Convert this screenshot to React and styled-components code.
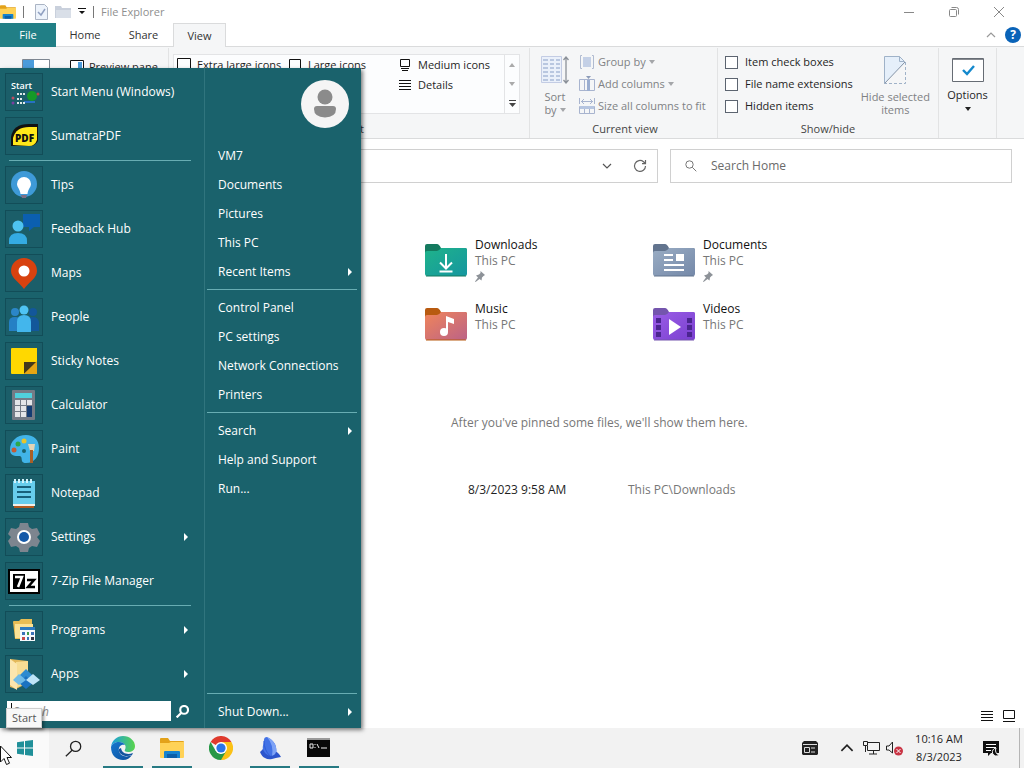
import React from "react";
import styled, { createGlobalStyle } from "styled-components";

const GlobalStyle = createGlobalStyle`
  *, *::before, *::after { box-sizing: border-box; }
  body { margin: 0; background: #fff; }
  body, button, input { font-family: "Open Sans", "Noto Sans", sans-serif; font-size: 12px; line-height: 16px; color: #1f1f1f; }
  button { border: 0; padding: 0; background: none; text-align: left; }
  svg { display: block; flex: none; }
`;

/* ---------- Desktop ---------- */

const Desktop = styled.div`
  position: relative;
  display: flex;
  flex-direction: column;
  min-height: 100vh;
  overflow: hidden;
`;

const ExplorerWindow = styled.main`
  flex: 1;
  display: flex;
  flex-direction: column;
`;

/* ---------- Title bar and tabs ---------- */

const TitleBar = styled.header`
  display: flex;
  align-items: center;
  height: 23px;
  padding-right: 3px;
`;

const QuickAccess = styled.div`
  display: flex;
  align-items: center;
  gap: 7px;
  flex: 1;
`;

const QuickDivider = styled.span`
  width: 1px;
  height: 12px;
  margin-right: ${(p) => (p.$wide ? 4 : 0)}px;
  background: #777;
`;

const WindowTitle = styled.h1`
  margin: 0;
  font-size: 11px;
  font-weight: 400;
  color: #8f8f8f;
`;

const CaptionButton = styled.button`
  display: flex;
  align-items: center;
  justify-content: center;
  width: 45px;
  height: 23px;
`;

const TabRow = styled.nav`
  display: flex;
  align-items: stretch;
  height: 24px;
  border-bottom: 1px solid #dadbdc;
`;

const Tab = styled.button`
  width: ${(p) => p.$width}px;
  height: 24px;
  font-size: 11px;
  text-align: center;
  color: ${(p) => (p.$file ? "#fff" : "#333")};
  background: ${(p) => (p.$file ? "#217f86" : p.$active ? "#f5f6f7" : "transparent")};
  border: ${(p) => (p.$active ? "1px solid #dadbdc" : "0")};
  border-bottom: 0;
`;

const TabTools = styled.div`
  display: flex;
  align-items: center;
  gap: 9px;
  margin-left: auto;
  padding-right: 3px;
`;

const HelpButton = styled.button`
  width: 16px;
  height: 16px;
  border-radius: 50%;
  background: #0a63b8;
  color: #fff;
  font-weight: 700;
  text-align: center;
`;

/* ---------- Ribbon ---------- */

const Ribbon = styled.section`
  display: flex;
  height: 92px;
  padding-top: 1px;
  background: #f5f6f7;
  border-bottom: 1px solid #dadbdc;
  &, button { font-size: 11px; }
`;

const RibbonGroup = styled.div`
  display: flex;
  flex-direction: column;
  width: ${(p) => p.$width}px;
  padding: 3px ${(p) => p.$pad}px 1px ${(p) => p.$padLeft || p.$pad}px;
  border-right: 1px solid #e2e3e4;
`;

const GroupBody = styled.div`
  display: flex;
  flex: 1;
  gap: ${(p) => p.$gap || 0}px;
`;

const GroupLabel = styled.div`
  text-align: center;
  color: #444;
`;

const PaneButton = styled.button`
  display: flex;
  align-items: center;
  gap: 5px;
  align-self: flex-start;
  padding: 8px 0 0 ${(p) => p.$indent}px;
  white-space: nowrap;
`;

const Gallery = styled.div`
  display: flex;
  width: 100%;
  height: 60px;
  margin-top: 3px;
  background: #fcfdfe;
  border: 1px solid #e3e4e6;
`;

const GalleryGrid = styled.div`
  flex: 1;
  display: grid;
  grid-template-columns: 111px 110px 1fr;
  grid-auto-rows: 20px;
`;

const GalleryItem = styled.button`
  display: flex;
  align-items: center;
  gap: 6px;
  padding-left: 3px;
  white-space: nowrap;
  grid-column: ${(p) => p.$column};
`;

const GalleryScroller = styled.div`
  display: flex;
  flex-direction: column;
  width: 15px;
  border-left: 1px solid #e3e4e6;
`;

const ScrollButton = styled.button`
  display: flex;
  flex: 1;
  align-items: center;
  justify-content: center;
`;

const StackButton = styled.button`
  display: flex;
  flex-direction: column;
  align-items: center;
  gap: 6px;
  padding-top: 5px;
  text-align: center;
  line-height: 13px;
  white-space: nowrap;
  color: ${(p) => (p.$enabled ? "#1f1f1f" : "#7f8184")};
`;

const CommandList = styled.div`
  display: flex;
  flex-direction: column;
`;

const Command = styled.button`
  display: flex;
  align-items: center;
  gap: 3px;
  height: 22px;
  color: #808285;
  white-space: nowrap;
`;

const CheckLabel = styled.label`
  display: flex;
  align-items: center;
  gap: 7px;
  height: 22px;
  white-space: nowrap;
`;

const CheckBox = styled.input`
  appearance: none;
  width: 13px;
  height: 13px;
  margin: 0;
  border: 1px solid #5c6470;
  background: #fff;
`;

const Inline = styled.span`
  display: inline-flex;
  align-items: center;
  gap: 3px;
`;

/* ---------- Address row and content ---------- */

const AddressRow = styled.div`
  display: flex;
  gap: 12px;
  padding: 10px 12px 0;
`;

const AddressBox = styled.div`
  display: flex;
  flex: 1;
  align-items: center;
  justify-content: flex-end;
  gap: 21px;
  height: 34px;
  padding-right: 10px;
  border: 1px solid #d0d0d0;
`;

const SearchBox = styled.label`
  display: flex;
  align-items: center;
  gap: 14px;
  width: 342px;
  height: 34px;
  padding-left: 14px;
  border: 1px solid #d0d0d0;
`;

const SearchHome = styled.input`
  flex: 1;
  min-width: 0;
  border: 0;
  outline: 0;
  padding: 0;
  background: transparent;
  &::placeholder { color: #6a6a6a; opacity: 1; }
`;

const Content = styled.section`
  flex: 1;
  padding: 54px 12px 0 425px;
`;

const TileGrid = styled.div`
  display: grid;
  grid-template-columns: repeat(auto-fill, 228px);
  grid-auto-rows: 64px;
`;

const Tile = styled.a`
  display: flex;
  gap: 8px;
  color: #1f1f1f;
  text-decoration: none;
`;

const TileIcon = styled.span`
  padding-top: 6px;
`;

const TileText = styled.span`
  display: flex;
  flex-direction: column;
  color: #777;
`;

const TileName = styled.span`
  color: #111;
`;

const PinHolder = styled.span`
  padding-top: 2px;
`;

const PinnedNote = styled.p`
  margin: 50px 0 0 26px;
  color: #777;
`;

const FileRow = styled.div`
  display: grid;
  grid-template-columns: 160px 1fr;
  margin: 51px 0 0 43px;
`;

const Muted = styled.span`
  color: #777;
`;

const StatusBar = styled.footer`
  display: flex;
  justify-content: flex-end;
  gap: 10px;
  padding: 0 9px 6px;
`;

/* ---------- Start menu ---------- */

const StartMenu = styled.aside`
  position: absolute;
  left: 0;
  bottom: 40px;
  display: flex;
  width: 361px;
  height: 660px;
  background: #1a626c;
  box-shadow: 2px 2px 4px rgba(0, 0, 0, 0.5);
`;

const Programs = styled.div`
  display: flex;
  flex-direction: column;
  width: 205px;
  padding: 2px 13px 0 5px;
  border-right: 1px solid #30757e;
`;

const ProgramButton = styled.button`
  display: flex;
  align-items: center;
  gap: 8px;
  height: 44px;
  padding-right: 2px;
  color: #fff;
`;

const IconFrame = styled.span`
  display: grid;
  place-items: center;
  width: 38px;
  height: 38px;
  border: 1px solid #124d58;
  background: #1b5e69;
`;

const ItemText = styled.span`
  flex: 1;
`;

const MenuRule = styled.hr`
  width: auto;
  height: 1px;
  margin: ${(p) => (p.$tight ? "2px 0 2px 4px" : "3px 0")};
  border: 0;
  background: #68adb3;
`;

const MenuSearchRow = styled.div`
  display: flex;
  align-items: center;
  gap: 5px;
  padding: 5px 2px 0 2px;
`;

const MenuField = styled.label`
  display: flex;
  align-items: center;
  flex: 1;
  gap: 1px;
  height: 20px;
  padding-left: 4px;
  background: #fff;
`;

const TextCaret = styled.span`
  width: 1px;
  height: 16px;
  background: #111;
`;

const MenuSearch = styled.input`
  flex: 1;
  min-width: 0;
  height: 20px;
  padding: 0;
  border: 0;
  background: transparent;
  &::placeholder { color: #8a8a8a; opacity: 1; font-style: italic; }
`;

const Places = styled.div`
  display: flex;
  flex: 1;
  flex-direction: column;
  padding: 12px 4px 2px 2px;
`;

const Avatar = styled.div`
  align-self: flex-end;
  margin: 0 8px 13px 0;
`;

const PlaceButton = styled.button`
  display: flex;
  align-items: center;
  height: 29px;
  padding: 0 4px 0 11px;
  color: #fff;
`;

const Spacer = styled.div`
  flex: 1;
`;

/* ---------- Taskbar ---------- */

const Taskbar = styled.footer`
  display: flex;
  height: 40px;
  background: #f2f2f2;
`;

const TaskButton = styled.button`
  display: flex;
  align-items: center;
  justify-content: center;
  width: 49px;
  height: 40px;
  background: ${(p) => (p.$start ? "#fafafa" : "transparent")};
`;

const TaskFace = styled.span`
  display: grid;
  place-items: center;
  width: 40px;
  height: 40px;
  border-bottom: 2px solid ${(p) => (p.$open ? "#277a83" : "transparent")};
  padding-top: 2px;
`;

const Tray = styled.div`
  display: flex;
  align-items: center;
  margin-left: auto;
`;

const TrayButton = styled.button`
  display: grid;
  place-items: center;
  width: ${(p) => p.$width}px;
  height: 40px;
`;

const Clock = styled.button`
  width: 64px;
  font-size: 11px;
  line-height: 18px;
  text-align: center;
`;

const ShowDesktop = styled.button`
  width: 5px;
  height: 40px;
  margin-left: 8px;
  border-left: 1px solid #b5b5b5;
`;

const Tooltip = styled.div`
  position: absolute;
  left: 6px;
  bottom: 40px;
  padding: 1px 5px;
  background: #f8f8f8;
  border: 1px solid #cfcfcf;
  color: #555;
  font-size: 11px;
  box-shadow: 2px 2px 3px rgba(0, 0, 0, 0.4);
`;

const Pointer = styled.div`
  position: absolute;
  left: 0;
  bottom: 2px;
`;

/* ---------- Drawings ---------- */

const Caret = ({ color = "#a4a6a9", w = 6, up }) => (
  <svg width={w} height="4" viewBox="0 0 6 4"><path d={up ? "M0 4h6L3 0z" : "M0 0h6L3 4z"} fill={color} /></svg>
);

const QuickCaret = () => (
  <svg width="8" height="7" viewBox="0 0 8 7"><path d="M0 0h8v1H0zM1 3h6L4 6z" fill="#111" /></svg>
);

const SubArrow = () => (
  <svg width="5" height="8" viewBox="0 0 5 8"><path d="M0 0v8l4-4z" fill="#fff" /></svg>
);

const Chevron = ({ up, w = 10, color = "#777" }) => (
  <svg width={w} height={w} viewBox="0 0 10 10" fill="none" stroke={color} strokeWidth="1.2">
    <path d={up ? "M1 7l4-4 4 4" : "M1 3l4 4 4-4"} />
  </svg>
);

const ExplorerGlyph = ({ size }) => (
  <svg width={size} height={size} viewBox="0 0 24 24">
    <path d="M0 3q0-1 1-1h7l2 3h13q1 0 1 1v5H0z" fill="#e3a21a" />
    <path d="M0 7h9l2-1h13v15q0 1-1 1H1q-1 0-1-1z" fill="#ffd257" />
    <path d="M4 22v-6q0-1 1-1h14q1 0 1 1v6z" fill="#1683cf" />
    <path d="M7 18h10v4H7z" fill="#0b5ea8" />
  </svg>
);

const QuickCheckIcon = () => (
  <svg width="13" height="16" viewBox="0 0 13 16" fill="none"><path d="M.5.500h9l3 3v12H.5z" fill="#edf3fb" stroke="#aab4c4" /><path d="M3 8l3 3 4-6" stroke="#8f9fc0" strokeWidth="1.5" /></svg>
);

const QuickFolderIcon = () => (
  <svg width="16" height="13" viewBox="0 0 16 13"><path d="M0 1h6l1 2h9v10H0z" fill="#c9d0dc" /><path d="M1 5h15v8H1z" fill="#d9dfe8" /></svg>
);

const IconSizeIcon = ({ kind }) => (
  <svg width="14" height="14" viewBox="0 0 14 14" fill="none" stroke="#111">
    {kind === "xl" && <path d="M.5.500h13v13H.5z" />}
    {kind === "lg" && <path d="M1.500 1.500h11v9h-11zM1 13.500h12" />}
    {kind === "md" && <path d="M2.500 1.500h9v7h-9zM3 10.500h8M4 12.500h6" />}
    {kind === "details" && <path d="M1 2.500h12M1 5.500h12M1 8.500h12M1 11.500h12" />}
  </svg>
);

const NavPaneIcon = () => (
  <svg width="28" height="26" viewBox="0 0 28 26"><path d="M.5.500h27v25H.5z" fill="#fff" stroke="#7d8691" /><path d="M1 1h11v24H1z" fill="#4b9cdb" /></svg>
);

const PreviewPaneIcon = () => (
  <svg width="14" height="14" viewBox="0 0 14 14"><path d="M.5.500h13v13H.5z" fill="#fff" stroke="#111" /><path d="M8 2h4v10H8z" fill="#4b9cdb" /></svg>
);

const SortIcon = () => (
  <svg width="28" height="28" viewBox="0 0 28 28" fill="none">
    <path d="M.5.500h20v26H.5z" fill="#eaf0fa" stroke="#c3cce4" />
    <path d="M2 4h5m2 0h4m2 0h4M2 8h5m2 0h4m2 0h4M2 12h5m2 0h4m2 0h4M2 16h5m2 0h4m2 0h4M2 20h5m2 0h4m2 0h4M2 24h5m2 0h4m2 0h4" stroke="#b9c7e0" strokeWidth="2" />
    <path d="M25 2v24M22.500 4L25 1l2.500 3M22.500 24l2.500 3 2.500-3" stroke="#8b9199" strokeWidth="1.300" />
  </svg>
);

const GroupIcon = () => (
  <svg width="16" height="16" viewBox="0 0 16 16" fill="none" stroke="#b0bbd0"><path d="M3 1.500H1.500v13H3M13 1.500h1.500v13H13" /><path d="M4 3h8v10H4z" fill="#c4d0e6" stroke="none" /></svg>
);

const AddColumnsIcon = () => (
  <svg width="16" height="16" viewBox="0 0 16 16" fill="none" stroke="#a8b4cf"><path d="M.5 3.500h15v11H.5zM5.500 3.500v11M10.500 3.500v11" /><path d="M8 4h3v11H8z" fill="#9baed0" stroke="none" /><path d="M7 0h5L9.500 3z" fill="#8c9bb8" stroke="none" /></svg>
);

const SizeColumnsIcon = () => (
  <svg width="16" height="16" viewBox="0 0 16 16" fill="none" stroke="#a8b4cf"><path d="M.5 0v6M15.500 0v6M2 3.500h12M5 1L2.500 3.500 5 6M11 1l2.500 2.500L11 6" /><path d="M.5 8.500h15v7H.5zM5.500 10v6M10.500 10v6" /><path d="M1 8h14v3H1z" fill="#b6c5e0" stroke="none" /></svg>
);

const HideIcon = () => (
  <svg width="22" height="28" viewBox="0 0 22 28" fill="none" stroke="#9fb2c8">
    <path d="M.5 27V.500h15l6 6z" fill="#e5effa" stroke="none" />
    <path d="M.5 27.500V.500h15l5 5M15.500.500v5h5" /><path d="M.5 27.500L21 6" stroke="#8593a5" /><path d="M21.500 6v21.500H1" strokeDasharray="3 2" />
  </svg>
);

const OptionsIcon = () => (
  <svg width="32" height="26" viewBox="0 0 32 26" fill="none"><path d="M.5 2.500h31v23H.5z" fill="#fff" stroke="#666c74" /><path d="M1 3.500h30" stroke="#85898f" /><path d="M11 14l4 4 7-8" stroke="#1489cd" strokeWidth="2.400" /></svg>
);

const RefreshIcon = () => (
  <svg width="14" height="14" viewBox="0 0 14 14" fill="none" stroke="#666" strokeWidth="1.200"><path d="M12.500 7a5.500 5.500 0 1 1-2-4.300L12.500 4.500M12.500 1v3.700H9" /></svg>
);

const SearchGlyph = ({ size = 12, color = "#777", flip, weight = 1 }) => (
  <svg width={size} height={size} viewBox="0 0 12 12" fill="none" stroke={color} strokeWidth={weight}>
    {flip ? <><circle cx="7.500" cy="4.500" r="3.600" /><path d="M5 7.200L.6 11.500" /></> : <><circle cx="4.500" cy="4.500" r="3.700" /><path d="M7.300 7.300l4 4" /></>}
  </svg>
);

const PinIcon = () => (
  <svg width="10" height="11" viewBox="0 0 10 11"><path d="M5.500 0L10 4 8.500 5 7 6.500 6.500 9.500 4.500 8 .6 11 0 10.400 3 6.500 1 4.500 4 3.500 5.500 2z" fill="#8d9298" /></svg>
);

const folderColors = {
  downloads: ["#147a5f", "#1fb38a", "#1596a0"],
  documents: ["#62748e", "#9aadc4", "#7488a8"],
  music: ["#b85a10", "#f0855a", "#bb6287"],
  videos: ["#7455ad", "#9a5ee6", "#7a3fd0"],
};

const FolderIcon = ({ kind }) => {
  const [tab, from, to] = folderColors[kind];
  return (
    <svg width="42" height="34" viewBox="0 0 42 34" fill="none">
      <defs><linearGradient id={`folder-${kind}`} x1="0" y1="0" x2="1" y2="1"><stop stopColor={from} /><stop offset="1" stopColor={to} /></linearGradient></defs>
      <path d="M0 12V3q0-2 2-2h10q2 0 4 4h24q2 0 2 2v6z" fill={tab} />
      <path d="M0 10q0-2 2-2h10q2 0 4-3h24q2 0 2 2v24q0 2-2 2H2q-2 0-2-2z" fill={`url(#folder-${kind})`} />
      <path d="M1 33h40" stroke={tab} />
      {kind === "downloads" && <path d="M21 11v14M15 19.500l6 6 6-6M14.500 28.500h13" stroke="#fff" strokeWidth="2" />}
      {kind === "documents" && <path d="M11 12h9M11 17h9M11 22h20M11 27h20" stroke="#fff" strokeWidth="2" />}
      {kind === "documents" && <path d="M23 11h8v7h-8z" fill="#fff" />}
      {kind === "music" && <><circle cx="19" cy="25" r="4" fill="#fff" /><path d="M21 9l8 3v5l-6-2v10h-2z" fill="#fff" /></>}
      {kind === "videos" && <><path d="M16 12l12 8-12 8z" fill="#fff" /><path d="M3 11h5v5H3zm0 7h5v5H3zm0 7h5v5H3zM34 11h5v5h-5zm0 7h5v5h-5zm0 7h5v5h-5z" fill="#4b2590" /></>}
    </svg>
  );
};

const AppIcon = ({ kind }) => {
  const drawings = {
    start: (
      <>
        <circle cx="26" cy="22" r="5" fill="#159a28" />
        <circle cx="7" cy="24" r="1.500" fill="#c44b62" /><circle cx="7" cy="29" r="1.500" fill="#7b3fa0" /><circle cx="32" cy="20" r="1.500" fill="#b44a4a" />
        <path d="M18 28h11" stroke="#2770c4" strokeWidth="2" />
        <text x="5" y="15" fontSize="9" fontWeight="600" fill="#fff">Start</text>
        <path d="M11 20h8M11 25h6M11 29h8" stroke="#dfe9ea" strokeWidth="2" strokeDasharray="2 1" />
      </>
    ),
    pdf: (
      <>
        <path d="M5 28V19Q7 6 23 6h9v17q-3 5-8 5z" fill="#111" />
        <path d="M7 27V20Q10 9 23 9h8v13q-2 6-8 6z" fill="#ffe81a" />
        <text x="9" y="24" fontSize="10" fontWeight="800" fill="#111">PDF</text>
      </>
    ),
    tips: (
      <>
        <circle cx="18" cy="17" r="13" fill="#3e9ad8" />
        <path d="M18 10a7 7 0 0 1 7 7c0 3-3 5-3.500 10h-7C14 22 11 20 11 17a7 7 0 0 1 7-7z" fill="#fff" />
        <path d="M15 28h6l-1 3h-4z" fill="#7c6f86" />
      </>
    ),
    feedback: (
      <>
        <path d="M17 3h17v13h-6l-5 4v-4h-6z" fill="#0b5fb0" />
        <circle cx="12" cy="15" r="5.500" fill="#4ec3f0" />
        <path d="M3 33v-3q0-8 9-8t9 8v3z" fill="#34abe2" />
      </>
    ),
    maps: (
      <>
        <path d="M18 3a13 13 0 0 1 13 13c0 7-8 11-13 18C13 27 5 23 5 16A13 13 0 0 1 18 3z" fill="#d8420f" />
        <circle cx="18" cy="16" r="5.500" fill="#fff" />
      </>
    ),
    people: (
      <>
        <circle cx="27" cy="13" r="4" fill="#13579a" /><path d="M22 32V22q0-4 5-4t6 5v9z" fill="#13579a" />
        <circle cx="9" cy="13" r="4" fill="#2b86c8" /><path d="M3 32v-9q0-5 6-5t6 5v9z" fill="#2580c5" />
        <circle cx="18" cy="11" r="4.500" fill="#4fc4f4" /><path d="M11 33V23q0-7 7-7t7 7v10z" fill="#43b6ec" />
      </>
    ),
    sticky: (
      <>
        <path d="M5 6q0-1 1-1h25v25q0 1-1 1H6q-1 0-1-1z" fill="#ffd800" />
        <path d="M18 31V19h13z" fill="#43391c" /><path d="M18 31L31 18v12q0 1-1 1z" fill="#e5a514" />
      </>
    ),
    calculator: (
      <>
        <rect x="6" y="3" width="23" height="30" rx="1" fill="#747b86" />
        <path d="M9 6h17v5H9z" fill="#50d0dc" />
        <path d="M9 13h5v5H9zm6 0h5v5h-5zm6 0h5v5h-5zM9 19h5v5H9zm6 0h5v5h-5zM9 25h5v5H9zm6 0h5v5h-5z" fill="#e4e5e8" />
        <path d="M21 19h5v11h-5z" fill="#143c72" />
      </>
    ),
    paint: (
      <>
        <path d="M20 4c8 0 13 5 13 13s-4 15-13 15c-7 0-2-7-7-7-4 0-9 0-9-6C4 10 11 4 20 4z" fill="#41b4e8" />
        <circle cx="18" cy="10" r="2.500" fill="#e8c52a" /><circle cx="12" cy="13" r="2.500" fill="#2da84a" /><circle cx="8" cy="19" r="2.500" fill="#c45b34" /><circle cx="18" cy="20" r="2" fill="#1a626c" />
        <path d="M22 13h7l-1 7h-4z" fill="#e3d4b5" /><path d="M24 19h3v13h-3z" fill="#a85f28" />
      </>
    ),
    notepad: (
      <>
        <path d="M7 6h22v25H7z" fill="#67cdec" />
        <path d="M9 4v4m4-4v4m4-4v4m4-4v4m4-4v4" stroke="#d0f2fb" strokeWidth="2" />
        <path d="M11 12h14M11 17h14M11 22h14" stroke="#17617c" strokeWidth="2" />
        <path d="M7 29h22v2H7z" fill="#f3f0e8" /><path d="M8 31h20v2H8z" fill="#b4591e" />
      </>
    ),
    settings: (
      <>
        <path d="M14 4h8l1 4 3 2 5-1 3 6-3 3 3 4-3 6-5-1-3 2-1 4h-8l-1-4-3-2-5 1-3-6 3-4-3-3 3-6 5 1 3-2z" fill="#7d858f" strokeLinejoin="round" />
        <circle cx="18" cy="18" r="7" fill="#fff" /><circle cx="18" cy="18" r="5" fill="#1559a8" />
      </>
    ),
    zip: (
      <>
        <path d="M2 6h32v25H2z" fill="#000" /><path d="M4 8h28v21H4z" fill="#fff" /><path d="M7 11h12v15H7z" fill="#000" />
        <path d="M9 14h7l-4 10" stroke="#fff" strokeWidth="2.500" fill="none" /><path d="M21 17h7l-6 7h7" stroke="#000" strokeWidth="2.500" fill="none" />
      </>
    ),
    programs: (
      <>
        <path d="M7 10q0-1 1-1h5l2-2h11v20H9z" fill="#e8bd54" /><path d="M9 12h18v14H9z" fill="#fbe295" />
        <path d="M14 15h15v14H14z" fill="#f6f9fc" /><path d="M14 15h15v3H14z" fill="#2d7bc0" />
        <path d="M16 20h3v3h-3zm9 0h3v3h-3zm-4 5h2v3h-2z" fill="#3a72b8" /><path d="M21 20h2v3h-2z" fill="#3d9c4b" /><path d="M16 25h3v3h-3z" fill="#c84848" /><path d="M25 25h3v3h-3z" fill="#334" />
      </>
    ),
    apps: (
      <>
        <path d="M4 3l18 2v22L10 33l-6-2z" fill="#e4b95b" /><path d="M10 6l12-1v21l-12 6z" fill="#f7dd94" /><path d="M4 3l7 5v26l-7-5z" fill="#fbe6ae" />
        <path d="M20 13l7 7-7 6-7-6z" fill="#2d8bd0" /><path d="M20 20l7 7-7 6-7-6z" fill="#1b72c0" />
        <path d="M13 18l7 6-7 5-6-5z" fill="#70bce8" /><path d="M27 18l7 6-7 5-7-5z" fill="#bfe4f7" />
      </>
    ),
  };
  return <svg width="36" height="36" viewBox="0 0 36 36">{drawings[kind]}</svg>;
};

const UserIcon = () => (
  <svg width="48" height="48" viewBox="0 0 48 48"><circle cx="24" cy="24" r="24" fill="#f5f5f5" /><circle cx="24" cy="17" r="7.500" fill="#8b8b8b" /><path d="M13 29q0-3 3-3h16q3 0 3 3 0 8-11 8.500Q13 37 13 29z" fill="#8b8b8b" /></svg>
);

const WindowsLogo = () => (
  <svg width="16" height="16" viewBox="0 0 16 16" fill="#209099"><path d="M0 2.300L7 1.200V7.500H0zM8 1L16 0v7.500H8zM0 8.500h7v6.300L0 13.700zM8 8.500h8V16l-8-1z" /></svg>
);

const EdgeLogo = () => (
  <svg width="24" height="24" viewBox="0 0 24 24">
    <defs>
      <linearGradient id="edge-top" x1="0" x2="1"><stop stopColor="#1a9ee0" /><stop offset="1" stopColor="#59d44b" /></linearGradient>
      <linearGradient id="edge-low" x1="0" x2="1" y1="0" y2="1"><stop stopColor="#1678cf" /><stop offset="1" stopColor="#0c4f9d" /></linearGradient>
    </defs>
    <path d="M0 11C1 4 6 0 12 0c7 0 12 5 12 10 0 4-3 6-7 6-3 0-4-1-3-2.500C16 10 13 6 8.500 6 4 6 1 8 0 11z" fill="url(#edge-top)" />
    <path d="M0 11c1-3 4-5 8-5 3 0 5 1 6 3-4-1-7 2-6 6 1 5 7 7 13 4-2 3-5 5-9 5C5 24 0 19 0 11z" fill="url(#edge-low)" />
    <path d="M8 13c-1 5 6 9 13 6l1-2c-5 2-11 1-12-5z" fill="#12549f" />
  </svg>
);

const ChromeLogo = () => (
  <svg width="24" height="24" viewBox="0 0 24 24">
    <path d="M12 12L1.600 6A12 12 0 0 1 22.400 6z" fill="#df3a2d" />
    <path d="M12 12V6h10.400A12 12 0 0 1 12 24z" fill="#fbc116" />
    <path d="M12 24A12 12 0 0 1 1.600 6l5.200 9L12 18l5.200-3z" fill="#279847" />
    <circle cx="12" cy="12" r="6" fill="#fff" /><circle cx="12" cy="12" r="4.600" fill="#2a75e8" />
  </svg>
);

const SailIcon = () => (
  <svg width="22" height="24" viewBox="0 0 22 24">
    <path d="M5 4q0-3 3-3 5 2 8 7 2 4 1 11l-6 3-7-4q-1-7 1-14z" fill="#4272e6" />
    <path d="M8 1q7 3 9 10 1 4 0 8l-4 1Q15 9 8 1z" fill="#7ea3f6" />
    <path d="M1 16l3-3q1 5 7 7 5 0 6-4 2 0 5 5-6 1-9 2-4 1-7-1-3-1-5-6z" fill="#2c55cc" />
    <path d="M5 5q0 9 6 15" fill="none" stroke="#2f5cd6" />
  </svg>
);

const ConsoleIcon = () => (
  <svg width="23" height="20" viewBox="0 0 23 20"><path d="M0 0h23v19H0z" fill="#080808" /><path d="M0 0h23v2H0z" fill="#999" /><path d="M3 6h3v4H3zm5 0v1m0 2v1m2-4l2 4m2 0h6" fill="none" stroke="#eee" /></svg>
);

const NewsIcon = () => (
  <svg width="16" height="16" viewBox="0 0 16 16"><path d="M2 1h12l2 2v11l-1 1H1l-1-1V3z" fill="#222" /><path d="M1 4.500h14" stroke="#ddd" /><path d="M2.500 7.500h5v5h-5z" fill="#222" stroke="#ddd" /><path d="M9 8h4M9 12h4" stroke="#ddd" /></svg>
);

const NetworkIcon = () => (
  <svg width="17" height="14" viewBox="0 0 17 14" fill="none" stroke="#222"><path d="M5 1.500h11.500v8H4.500V5M10.500 10v3M6 13h8" /><path d="M.5.500h4v4h-4zM2.500 5v6" /></svg>
);

const MutedIcon = () => (
  <svg width="18" height="15" viewBox="0 0 18 15" fill="none"><path d="M6.500 1v11L3 9H.5V5H3z" stroke="#222" /><circle cx="12.500" cy="10" r="4.500" fill="#c93545" /><path d="M10.500 8l4 4m0-4l-4 4" stroke="#fff" /></svg>
);

const NotesIcon = () => (
  <svg width="17" height="17" viewBox="0 0 17 17"><path d="M0 1h16v12H8l-3 3v-3H0z" fill="#111" /><path d="M3 4.500h10M3 7.500h10M3 10.500h5" stroke="#fff" /><path d="M13 8a4 4 0 1 0 3 7 5 5 0 0 1-3-7z" fill="#111" stroke="#f2f2f2" /></svg>
);

const ListViewIcon = () => (
  <svg width="12" height="12" viewBox="0 0 12 12" stroke="#111"><path d="M0 1.500h12M0 4.500h12M0 7.500h12M0 10.500h12" /></svg>
);

const LargeViewIcon = () => (
  <svg width="12" height="12" viewBox="0 0 12 12" fill="none" stroke="#111"><path d="M.5.500h11v8H.5zM0 11.500h12" /></svg>
);

const CursorIcon = () => (
  <svg width="12" height="21" viewBox="0 0 12 21"><path d="M.5 1v16l3.500-3.500 2.500 6 3-1.300L7 12.500h4.500z" fill="#fff" stroke="#111" /></svg>
);

const CaptionGlyph = ({ kind }) => (
  <svg width="12" height="12" viewBox="0 0 12 12" fill="none" stroke="#888">
    {kind === "min" && <path d="M1 6.500h10" />}
    {kind === "max" && <><rect x="1.500" y="3.500" width="7" height="7" rx="1" /><path d="M3.500 1.500h5q2 0 2 2v5" /></>}
    {kind === "close" && <path d="M1 1l10 10M11 1L1 11" />}
  </svg>
);

/* ---------- Data ---------- */

const programs = [
  { icon: "start", name: "Start Menu (Windows)" },
  { icon: "pdf", name: "SumatraPDF" },
  { rule: true },
  { icon: "tips", name: "Tips" },
  { icon: "feedback", name: "Feedback Hub" },
  { icon: "maps", name: "Maps" },
  { icon: "people", name: "People" },
  { icon: "sticky", name: "Sticky Notes" },
  { icon: "calculator", name: "Calculator" },
  { icon: "paint", name: "Paint" },
  { icon: "notepad", name: "Notepad" },
  { icon: "settings", name: "Settings", sub: true },
  { icon: "zip", name: "7-Zip File Manager" },
  { rule: true },
  { icon: "programs", name: "Programs", sub: true },
  { icon: "apps", name: "Apps", sub: true },
];

const places = [
  { name: "VM7" },
  { name: "Documents" },
  { name: "Pictures" },
  { name: "This PC" },
  { name: "Recent Items", sub: true },
  { rule: true },
  { name: "Control Panel" },
  { name: "PC settings" },
  { name: "Network Connections" },
  { name: "Printers" },
  { rule: true },
  { name: "Search", sub: true },
  { name: "Help and Support" },
  { name: "Run..." },
];

const folders = [
  { kind: "downloads", name: "Downloads", pinned: true },
  { kind: "documents", name: "Documents", pinned: true },
  { kind: "music", name: "Music" },
  { kind: "videos", name: "Videos" },
];

const layouts = [
  { kind: "xl", name: "Extra large icons", column: 1 },
  { kind: "lg", name: "Large icons", column: 2 },
  { kind: "md", name: "Medium icons", column: 3 },
  { kind: "details", name: "Details", column: 3 },
];

const tasks = [
  { name: "Search", icon: <SearchGlyph size={17} color="#222" flip weight={0.9} /> },
  { name: "Microsoft Edge", icon: <EdgeLogo />, open: true },
  { name: "File Explorer", icon: <ExplorerGlyph size={24} />, open: true },
  { name: "Google Chrome", icon: <ChromeLogo /> },
  { name: "Open-Shell", icon: <SailIcon />, open: true },
  { name: "Command Prompt", icon: <ConsoleIcon />, open: true },
];

/* ---------- Page ---------- */

const PlaceRow = ({ item }) =>
  item.rule ? <MenuRule /> : (
    <PlaceButton><ItemText>{item.name}</ItemText>{item.sub && <SubArrow />}</PlaceButton>
  );

export default function App() {
  return (
    <Desktop>
      <GlobalStyle />
      <ExplorerWindow>
        <TitleBar>
          <QuickAccess>
            <ExplorerGlyph size={16} />
            <QuickDivider $wide />
            <QuickCheckIcon />
            <QuickFolderIcon />
            <QuickCaret />
            <QuickDivider />
            <WindowTitle>File Explorer</WindowTitle>
          </QuickAccess>
          <CaptionButton aria-label="Minimize"><CaptionGlyph kind="min" /></CaptionButton>
          <CaptionButton aria-label="Restore"><CaptionGlyph kind="max" /></CaptionButton>
          <CaptionButton aria-label="Close"><CaptionGlyph kind="close" /></CaptionButton>
        </TitleBar>
        <TabRow>
          <Tab $file $width={56}>File</Tab>
          <Tab $width={58}>Home</Tab>
          <Tab $width={59}>Share</Tab>
          <Tab $active $width={53}>View</Tab>
          <TabTools>
            <button aria-label="Collapse ribbon"><Chevron up color="#999" /></button>
            <HelpButton aria-label="Help">?</HelpButton>
          </TabTools>
        </TabRow>
        <Ribbon>
          <RibbonGroup $width={169} $pad={8}>
            <GroupBody>
              <PaneButton aria-label="Navigation pane" $indent={14}><NavPaneIcon /></PaneButton>
              <PaneButton $indent={20}><PreviewPaneIcon />Preview pane</PaneButton>
            </GroupBody>
          </RibbonGroup>
          <RibbonGroup $width={361} $pad={9} $padLeft={4}>
            <GroupBody>
              <Gallery>
                <GalleryGrid>
                  {layouts.map((l) => (
                    <GalleryItem key={l.name} $column={l.column}><IconSizeIcon kind={l.kind} />{l.name}</GalleryItem>
                  ))}
                </GalleryGrid>
                <GalleryScroller>
                  <ScrollButton aria-label="Scroll up"><Caret up color="#aaa" /></ScrollButton>
                  <ScrollButton aria-label="Scroll down"><Caret color="#aaa" /></ScrollButton>
                  <ScrollButton aria-label="More layouts">
                    <svg width="7" height="7" viewBox="0 0 7 7"><path d="M0 0h7v1H0zM0 3h7L3.500 7z" fill="#444" /></svg>
                  </ScrollButton>
                </GalleryScroller>
              </Gallery>
            </GroupBody>
            <GroupLabel>Layout</GroupLabel>
          </RibbonGroup>
          <RibbonGroup $width={188} $pad={8} $padLeft={11}>
            <GroupBody $gap={10}>
              <StackButton><SortIcon /><span>Sort<br /><Inline>by<Caret /></Inline></span></StackButton>
              <CommandList>
                <Command><GroupIcon />Group by<Caret /></Command>
                <Command><AddColumnsIcon />Add columns<Caret /></Command>
                <Command><SizeColumnsIcon />Size all columns to fit</Command>
              </CommandList>
            </GroupBody>
            <GroupLabel>Current view</GroupLabel>
          </RibbonGroup>
          <RibbonGroup $width={221} $pad={7}>
            <GroupBody $gap={8}>
              <CommandList>
                {["Item check boxes", "File name extensions", "Hidden items"].map((name) => (
                  <CheckLabel key={name}><CheckBox type="checkbox" />{name}</CheckLabel>
                ))}
              </CommandList>
              <StackButton><HideIcon /><span>Hide selected<br />items</span></StackButton>
            </GroupBody>
            <GroupLabel>Show/hide</GroupLabel>
          </RibbonGroup>
          <RibbonGroup $width={58} $pad={5}>
            <StackButton $enabled><OptionsIcon /><span>Options</span><Caret color="#222" /></StackButton>
          </RibbonGroup>
        </Ribbon>
        <AddressRow>
          <AddressBox>
            <button aria-label="Previous locations"><Chevron color="#555" /></button>
            <button aria-label="Refresh"><RefreshIcon /></button>
          </AddressBox>
          <SearchBox>
            <SearchGlyph />
            <SearchHome type="text" placeholder="Search Home" aria-label="Search Home" />
          </SearchBox>
        </AddressRow>
        <Content>
          <TileGrid>
            {folders.map((f) => (
              <Tile key={f.name} href="#">
                <TileIcon><FolderIcon kind={f.kind} /></TileIcon>
                <TileText>
                  <TileName>{f.name}</TileName>
                  <span>This PC</span>
                  {f.pinned && <PinHolder><PinIcon /></PinHolder>}
                </TileText>
              </Tile>
            ))}
          </TileGrid>
          <PinnedNote>After you've pinned some files, we'll show them here.</PinnedNote>
          <FileRow><span>8/3/2023 9:58 AM</span><Muted>This PC\Downloads</Muted></FileRow>
        </Content>
        <StatusBar>
          <button aria-label="Details view"><ListViewIcon /></button>
          <button aria-label="Large icons view"><LargeViewIcon /></button>
        </StatusBar>
      </ExplorerWindow>

      <Taskbar>
        <TaskButton $start aria-label="Start"><WindowsLogo /></TaskButton>
        {tasks.map((t) => (
          <TaskButton key={t.name} aria-label={t.name}><TaskFace $open={t.open}>{t.icon}</TaskFace></TaskButton>
        ))}
        <Tray>
          <TrayButton $width={50} aria-label="News"><NewsIcon /></TrayButton>
          <TrayButton $width={24} aria-label="Show hidden icons"><Chevron up w={14} color="#222" /></TrayButton>
          <TrayButton $width={24} aria-label="Network"><NetworkIcon /></TrayButton>
          <TrayButton $width={24} aria-label="Volume"><MutedIcon /></TrayButton>
          <Clock>10:16 AM<br />8/3/2023</Clock>
          <TrayButton $width={40} aria-label="Notifications"><NotesIcon /></TrayButton>
          <ShowDesktop aria-label="Show desktop" />
        </Tray>
      </Taskbar>

      <StartMenu>
        <Programs>
          {programs.map((p, i) =>
            p.rule ? <MenuRule key={i} $tight /> : (
              <ProgramButton key={i}>
                <IconFrame><AppIcon kind={p.icon} /></IconFrame>
                <ItemText>{p.name}</ItemText>
                {p.sub && <SubArrow />}
              </ProgramButton>
            )
          )}
          <MenuSearchRow>
            <MenuField>
              <TextCaret />
              <MenuSearch type="text" placeholder="Search" aria-label="Search programs" />
            </MenuField>
            <SearchGlyph size={13} color="#fff" flip weight={2} />
          </MenuSearchRow>
        </Programs>
        <Places>
          <Avatar><UserIcon /></Avatar>
          {places.map((item, i) => <PlaceRow key={i} item={item} />)}
          <Spacer />
          <MenuRule />
          <PlaceRow item={{ name: "Shut Down...", sub: true }} />
        </Places>
      </StartMenu>
      <Tooltip role="tooltip">Start</Tooltip>
      <Pointer><CursorIcon /></Pointer>
    </Desktop>
  );
}
